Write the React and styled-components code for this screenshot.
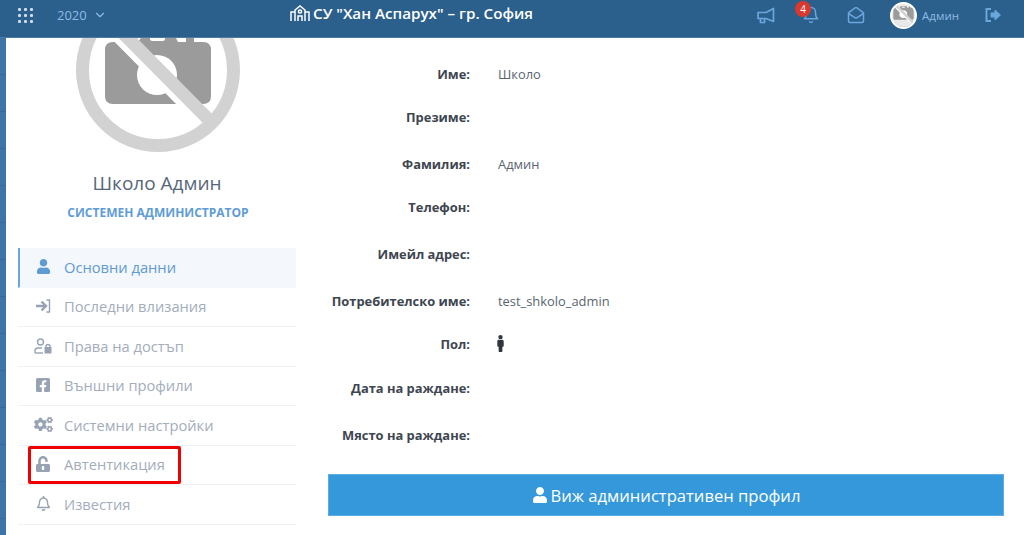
import React from "react";
import styled, { createGlobalStyle } from "styled-components";
import { FaUser, FaFacebookSquare, FaCogs, FaUnlockAlt, FaRegBell, FaMale } from "react-icons/fa";
import { LuChevronDown, LuBell, LuMailOpen } from "react-icons/lu";

const GlobalStyle = createGlobalStyle`
  html, body {
    margin: 0;
    padding: 0;
    height: 535px;
    overflow: hidden;
    background: #fff;
    font-family: "Open Sans", "Liberation Sans", sans-serif;
  }
`;

const Page = styled.div`
  width: 1024px;
  height: 535px;
  display: flex;
  flex-direction: column;
  overflow: hidden;
`;

const TopBar = styled.header`
  flex: none;
  height: 38px;
  box-sizing: border-box;
  padding-bottom: 7px;
  background: #2b5f8c;
  border-bottom: 1px solid #4a7ba6;
  display: flex;
  align-items: center;
  color: #fff;
`;

const AppsGrid = styled.div`
  margin-left: 18px;
  display: grid;
  grid-template-columns: repeat(3, 3px);
  grid-auto-rows: 3px;
  gap: 3px;
  span {
    background: #cfdde9;
    border-radius: 1px;
  }
`;

const YearSelect = styled.div`
  margin-left: 24px;
  width: 233px;
  display: flex;
  align-items: center;
  gap: 6px;
  font-size: 13px;
  color: #8fbbe3;
  svg {
    font-size: 14px;
  }
`;

const SchoolTitle = styled.div`
  width: 245px;
  margin-top: -4px;
  display: flex;
  align-items: center;
  gap: 3px;
  font-size: 15.2px;
  font-weight: 600;
  white-space: nowrap;
`;

const TopActions = styled.div`
  margin-left: auto;
  display: flex;
  align-items: center;
  color: #6ba6dc;
  padding-right: 22px;
`;

const ActionIcon = styled.div`
  position: relative;
  width: 18px;
  height: 18px;
  margin-left: ${(p) => p.$gap}px;
  font-size: 18px;
  svg {
    display: block;
  }
`;

const Badge = styled.span`
  position: absolute;
  top: -5px;
  left: -7px;
  width: 16px;
  height: 16px;
  border-radius: 50%;
  background: #d9382e;
  color: #fff;
  font-size: 10px;
  line-height: 16px;
  text-align: center;
`;

const UserChip = styled.div`
  margin-left: 25px;
  display: flex;
  align-items: center;
  gap: 5px;
  font-size: 11.5px;
  color: #8fbbe3;
`;

const SmallAvatar = styled.div`
  width: 27px;
  height: 27px;
  border-radius: 50%;
  background: #e9e9e9;
  border: 2px solid #fff;
  box-sizing: border-box;
  overflow: hidden;
  svg {
    display: block;
  }
`;

const Body = styled.div`
  flex: 1;
  min-height: 0;
  display: flex;
`;

const SideStrip = styled.div`
  flex: none;
  width: 6px;
  background: repeating-linear-gradient(#3f74a8 0 36px, #38699a 36px 37px);
`;

const Sidebar = styled.aside`
  flex: none;
  width: 290px;
  box-sizing: border-box;
  padding-left: 12px;
  overflow: hidden;
`;

const Photo = styled.div`
  margin: -50px 0 0 58px;
  width: 164px;
  height: 164px;
  svg {
    display: block;
  }
`;

const Name = styled.div`
  margin-top: 19px;
  text-align: center;
  font-size: 19px;
  line-height: 24px;
  color: #56677a;
`;

const Role = styled.div`
  margin-top: 10px;
  padding-left: 2px;
  text-align: center;
  font-size: 12px;
  line-height: 16px;
  font-weight: 700;
  color: #5e9cd6;
`;

const Menu = styled.nav`
  margin-top: 27px;
`;

const MenuRow = styled.div`
  height: 39.5px;
  box-sizing: border-box;
  display: flex;
  align-items: center;
  font-size: 14.7px;
  padding-bottom: 1px;
  padding-left: ${(p) => (p.$active ? "15px" : "17px")};
  color: ${(p) => (p.$active ? "#5f9bd3" : "#a3adbb")};
  background: ${(p) => (p.$active ? "#f4f7fb" : "#fff")};
  border-left: ${(p) => (p.$active ? "2px solid #6aa5de" : "none")};
  border-bottom: 1px solid ${(p) => (p.$active ? "#f4f7fb" : "#eef1f5")};
  position: relative;
`;

const MenuIcon = styled.span`
  width: 16px;
  height: 16px;
  margin-right: 13px;
  display: flex;
  align-items: center;
  justify-content: center;
  font-size: ${(p) => p.$size || 15}px;
  color: ${(p) => (p.$active ? "#5f9bd3" : "#97a3b4")};
  svg {
    flex: none;
  }
`;

const Highlight = styled.div`
  position: absolute;
  left: 10px;
  top: 0;
  width: 153px;
  height: 38px;
  box-sizing: border-box;
  border: 3px solid #f00000;
  border-radius: 2px;
`;

const Content = styled.main`
  flex: 1;
  min-width: 0;
  padding: 26px 20px 0 32px;
`;

const InfoRow = styled.div`
  height: ${(p) => p.$height}px;
  display: grid;
  grid-template-columns: 142px 1fr;
  column-gap: 28px;
  align-items: start;
  font-size: 12.9px;
  line-height: 20px;
  color: #5b6570;
`;

const Label = styled.div`
  text-align: right;
  font-weight: 700;
  color: #3e4650;
  white-space: nowrap;
`;

const MaleIcon = styled(FaMale)`
  display: block;
  width: 7px;
  height: 17px;
  margin: 1px 0 0 -1px;
  color: #2f3640;
`;

const ProfileButton = styled.button`
  width: 676px;
  height: 42px;
  box-sizing: border-box;
  background: #3498db;
  border: 1px solid #5dade2;
  color: #fff;
  font: 400 16.6px "Open Sans", sans-serif;
  display: flex;
  align-items: center;
  justify-content: center;
  gap: 3px;
`;

const NoPhoto = ({ size, viewBox = "0 0 164 164" }) => (
  <svg width={size} height={size} viewBox={viewBox}>
    <path
      d="M29 62 Q29 54 37 54 H62 L68 46 H98 L102 54 H110 V47 H118 V54 H127 Q135 54 135 62 V108 Q135 116 127 116 H37 Q29 116 29 108 Z"
      fill="#9b9b9b"
    />
    <rect x="74" y="48" width="15" height="5" rx="2.5" fill="#fff" />
    <circle cx="81" cy="87" r="20" fill="#fff" />
    <circle cx="82" cy="82" r="75.5" fill="none" stroke="#d2d2d2" strokeWidth="13" />
    <path d="M38 40 L124 127" stroke="#fff" strokeWidth="13" transform="translate(-2 2)" />
    <path d="M24 22 L140 139" stroke="#d2d2d2" strokeWidth="13" />
  </svg>
);

const SchoolIcon = () => (
  <svg width="20" height="18" viewBox="0 0 20 18" fill="none" stroke="#fff" strokeWidth="1.5">
    <path d="M1 17V8H5M19 17V8H15M5 17V6L10 2L15 6V17M8 17V12H12V17" />
    <circle cx="10" cy="7.5" r="1.6" />
  </svg>
);

const MegaphoneIcon = () => (
  <svg width="18" height="18" viewBox="0 0 18 18" fill="none" stroke="currentColor" strokeWidth="1.7">
    <path d="M1 6.5H9L16.5 2.5V15.5L9 12.5H1Z" strokeLinejoin="round" />
    <path d="M3.5 12.5V16.5H7.5V12.5" />
  </svg>
);

const LogoutIcon = () => (
  <svg width="18" height="18" viewBox="0 0 18 18" fill="none" stroke="currentColor" strokeWidth="2">
    <path d="M7 3H2.5V15H7" />
    <path d="M7 7H11V4L16.5 9L11 14V11H7Z" fill="currentColor" strokeWidth="1" />
  </svg>
);

const SignInIcon = () => (
  <svg width="16" height="14" viewBox="0 0 16 14" fill="none" stroke="currentColor">
    <path d="M1 7H10M6.5 2.5L11 7L6.5 11.5" strokeWidth="2.4" />
    <path d="M11.5 1H14.5V13H11.5" strokeWidth="1.4" />
  </svg>
);

const UserLockIcon = () => (
  <svg width="18" height="16" viewBox="0 0 18 16" fill="none" stroke="currentColor" strokeWidth="1.4">
    <circle cx="6.5" cy="4" r="3" />
    <path d="M1 15V13Q1 10 4 10H8" />
    <path d="M1 15H9" />
    <rect x="10.5" y="9" width="7" height="6.5" fill="currentColor" stroke="none" />
    <path d="M12 9V7.5Q14 5.5 16 7.5V9" />
  </svg>
);

const menuItems = [
  { label: "Основни данни", icon: <FaUser />, active: true },
  { label: "Последни влизания", icon: <SignInIcon /> },
  { label: "Права на достъп", icon: <UserLockIcon /> },
  { label: "Външни профили", icon: <FaFacebookSquare />, size: 16 },
  { label: "Системни настройки", icon: <FaCogs />, size: 19 },
  { label: "Автентикация", icon: <FaUnlockAlt />, size: 16, marked: true },
  { label: "Известия", icon: <FaRegBell /> },
];

const infoRows = [
  { label: "Име:", value: "Школо", height: 43 },
  { label: "Презиме:", height: 47 },
  { label: "Фамилия:", value: "Админ", height: 43 },
  { label: "Телефон:", height: 47 },
  { label: "Имейл адрес:", height: 47 },
  { label: "Потребителско име:", value: "test_shkolo_admin", height: 43 },
  { label: "Пол:", value: <MaleIcon />, height: 44 },
  { label: "Дата на раждане:", height: 47 },
  { label: "Място на раждане:", height: 49 },
];

const App = () => (
  <Page>
    <GlobalStyle />
    <TopBar>
      <AppsGrid>
        {Array.from({ length: 9 }, (_, i) => <span key={i} />)}
      </AppsGrid>
      <YearSelect>2020 <LuChevronDown /></YearSelect>
      <SchoolTitle><SchoolIcon />СУ "Хан Аспарух" – гр. София</SchoolTitle>
      <TopActions>
        <ActionIcon $gap={0}><MegaphoneIcon /></ActionIcon>
        <ActionIcon $gap={27}><LuBell /><Badge>4</Badge></ActionIcon>
        <ActionIcon $gap={27}><LuMailOpen /></ActionIcon>
        <UserChip>
          <SmallAvatar><NoPhoto size={23} viewBox="22 34 120 120" /></SmallAvatar>
          Админ
        </UserChip>
        <ActionIcon $gap={25}><LogoutIcon /></ActionIcon>
      </TopActions>
    </TopBar>
    <Body>
      <SideStrip />
      <Sidebar>
        <Photo><NoPhoto size={164} /></Photo>
        <Name>Школо Админ</Name>
        <Role>СИСТЕМЕН АДМИНИСТРАТОР</Role>
        <Menu>
          {menuItems.map((item) => (
            <MenuRow key={item.label} $active={item.active}>
              <MenuIcon $active={item.active} $size={item.size}>{item.icon}</MenuIcon>
              {item.label}
              {item.marked && <Highlight />}
            </MenuRow>
          ))}
        </Menu>
      </Sidebar>
      <Content>
        {infoRows.map((row) => (
          <InfoRow key={row.label} $height={row.height}>
            <Label>{row.label}</Label>
            <div>{row.value}</div>
          </InfoRow>
        ))}
        <ProfileButton><FaUser size={16} />Виж административен профил</ProfileButton>
      </Content>
    </Body>
  </Page>
);

export default App;
